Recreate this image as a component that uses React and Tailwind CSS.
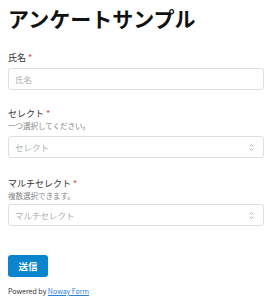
import React from 'react';

const font = { fontFamily: '"Noto Sans CJK JP", "Noto Sans", sans-serif' };

const Updown = () => (
  <svg width="7" height="9" viewBox="0 0 7 9" fill="none" stroke="#a3a8ae" strokeWidth="0.9" className="shrink-0">
    <path d="M1.8 3.3 L3.5 1.6 L5.2 3.3" />
    <path d="M1.8 5.7 L3.5 7.4 L5.2 5.7" />
  </svg>
);

const Label = ({ text }) => (
  <div className="text-[9px] leading-[12px] text-[#333]">
    {text}
    <span className="text-[#e53e3e] ml-[2px]">*</span>
  </div>
);

const Hint = ({ text }) => (
  <div className="text-[7.5px] leading-[12px] text-[#888]">{text}</div>
);

const Box = ({ placeholder, select }) => (
  <div className="h-[22px] border border-[#dcdfe3] rounded-[3px] flex items-center justify-between pl-[6px] pr-[8px] bg-white">
    <span className="text-[8.5px] text-[#a9adb3]">{placeholder}</span>
    {select && <Updown />}
  </div>
);

export default function App() {
  return (
    <div className="w-[272px] h-[300px] bg-white px-[8px] pt-[3px] flex flex-col" style={font}>
      <h1 className="text-[21px] leading-[30px] font-bold text-[#111]">アンケートサンプル</h1>

      <div className="mt-[19px]">
        <Label text="氏名" />
        <div className="mt-[4px]"><Box placeholder="氏名" /></div>
      </div>

      <div className="mt-[18px]">
        <Label text="セレクト" />
        <Hint text="一つ選択してください。" />
        <div className="mt-[4px]"><Box placeholder="セレクト" select /></div>
      </div>

      <div className="mt-[20px]">
        <Label text="マルチセレクト" />
        <Hint text="複数選択できます。" />
        <div className="mt-[2px]"><Box placeholder="マルチセレクト" select /></div>
      </div>

      <button className="mt-[29px] w-[40px] h-[22px] rounded-[3px] bg-[#0a84cc] text-white text-[9.5px] font-bold self-start">
        送信
      </button>

      <div className="mt-[9px] text-[7px] leading-[10px] text-[#333]">
        Powered by <a className="text-[#2b7fd6] underline">Noway Form</a>
      </div>
    </div>
  );
}
